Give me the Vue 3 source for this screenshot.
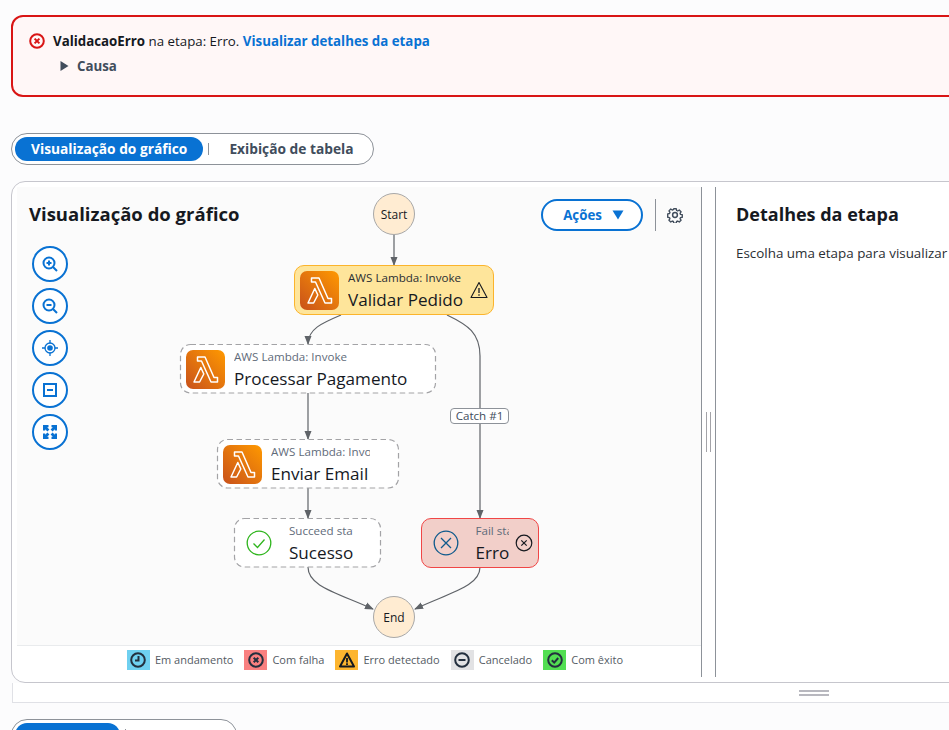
<script setup>
const legend = [
  { label: "Em andamento", bg: "#6fd0f0", kind: "clock" },
  { label: "Com falha", bg: "#f98080", kind: "x" },
  { label: "Erro detectado", bg: "#fdb52f", kind: "warn" },
  { label: "Cancelado", bg: "#e2e2e4", kind: "minus" },
  { label: "Com êxito", bg: "#52de52", kind: "check" },
];

const lambdas = [
  { id: "validar", title: "Validar Pedido", cls: "validar" },
  { id: "processar", title: "Processar Pagamento", cls: "processar" },
  { id: "enviar", title: "Enviar Email", cls: "enviar" },
];
</script>

<template>
  <div class="page">
    <div class="alert">
      <div class="alert-line">
        <svg class="alert-icon" viewBox="0 0 16 16" width="16" height="16">
          <circle cx="8" cy="8" r="6.8" fill="none" stroke="#d91515" stroke-width="2" />
          <path d="M5.6 5.6l4.8 4.8M10.4 5.6l-4.8 4.8" stroke="#d91515" stroke-width="2" fill="none" />
        </svg>
        <span><b>ValidacaoErro</b> na etapa: Erro. <a class="link">Visualizar detalhes da etapa</a></span>
      </div>
      <div class="cause">
        <svg viewBox="0 0 9 10" width="9" height="10"><path d="M0.5 0l8 5-8 5z" fill="#414d5c" /></svg>
        <b>Causa</b>
      </div>
    </div>

    <div class="segmented">
      <span class="seg active">Visualização do gráfico</span>
      <span class="seg-sep"></span>
      <span class="seg">Exibição de tabela</span>
    </div>

    <div class="panel">
      <div class="graph-side">
        <div class="canvas">
          <h2 class="graph-title">Visualização do gráfico</h2>

          <div class="toolbar">
            <button class="actions">Ações
              <svg viewBox="0 0 12 10" width="12" height="10"><path d="M0.5 0.5h11l-5.5 9z" fill="#0972d3" /></svg>
            </button>
            <span class="tool-sep"></span>
            <svg class="gear" viewBox="0 0 16 16" width="16" height="16">
              <path d="M6.6 1h2.8l.4 2 1.200.5 1.700-1.100 2 2-1.100 1.700.5 1.200 2 .4v2.800l-2 .4-.5 1.200 1.100 1.700-2 2-1.700-1.100-1.200.5-.4 2H6.600l-.4-2-1.200-.5-1.700 1.100-2-2 1.100-1.700-.5-1.200-2-.4V6.700l2-.4.5-1.200L1.300 3.400l2-2L5 2.500l1.200-.5z" fill="none" stroke="#414d5c" stroke-width="1.500" stroke-linejoin="round" transform="translate(.8 .8) scale(.9)" />
              <circle cx="8" cy="8" r="2.400" fill="none" stroke="#414d5c" stroke-width="1.500" />
            </svg>
          </div>

          <div class="zooms">
            <button class="zoom">
              <svg viewBox="0 0 16 16" width="16" height="16"><circle cx="7" cy="7" r="5.500" fill="none" stroke="#0972d3" stroke-width="2" /><path d="M11 11l4 4M4.500 7h5M7 4.500v5" stroke="#0972d3" stroke-width="2" fill="none" /></svg>
            </button>
            <button class="zoom">
              <svg viewBox="0 0 16 16" width="16" height="16"><circle cx="7" cy="7" r="5.500" fill="none" stroke="#0972d3" stroke-width="2" /><path d="M11 11l4 4M4.500 7h5" stroke="#0972d3" stroke-width="2" fill="none" /></svg>
            </button>
            <button class="zoom">
              <svg viewBox="0 0 16 16" width="16" height="16"><circle cx="8" cy="8" r="5" fill="none" stroke="#0972d3" stroke-width="1.300" /><circle cx="8" cy="8" r="2.800" fill="#0972d3" /><path d="M8 0v3.500M8 12.500V16M0 8h3.500M12.500 8H16" stroke="#0972d3" stroke-width="1.300" /></svg>
            </button>
            <button class="zoom">
              <svg viewBox="0 0 16 16" width="16" height="16"><rect x="2" y="2" width="12" height="12" fill="none" stroke="#0972d3" stroke-width="2" /><path d="M5 8h6" stroke="#0972d3" stroke-width="2" /></svg>
            </button>
            <button class="zoom">
              <svg viewBox="0 0 16 16" width="16" height="16"><path d="M1 6.500V1h5.500v2.200H5.200L7.400 5.400 5.400 7.400 3.200 5.200v1.300zM15 6.500V1H9.500v2.200h1.300L8.600 5.400l2 2 2.200-2.200v1.300zM1 9.500V15h5.500v-2.200H5.200l2.200-2.200-2-2-2.200 2.200V9.500zM15 9.500V15H9.500v-2.200h1.300l-2.200-2.200 2-2 2.200 2.200V9.500z" fill="#0972d3" /></svg>
            </button>
          </div>

          <svg class="edges" width="684" height="458" viewBox="17 187 684 458">
            <defs>
              <marker id="arrow" markerWidth="9" markerHeight="8" refX="8" refY="4" orient="auto" markerUnits="userSpaceOnUse">
                <path d="M0 .5l9 3.500-9 3.500z" fill="#5f6368" />
              </marker>
            </defs>
            <g fill="none" stroke="#5f6368" stroke-width="1.200">
              <path d="M394 235V265" marker-end="url(#arrow)" />
              <path d="M341 315C322 323 308 329 308 344" marker-end="url(#arrow)" />
              <path d="M447 315C468 325 480 333 480 356V518" marker-end="url(#arrow)" />
              <path d="M308 393V439" marker-end="url(#arrow)" />
              <path d="M308 488V518" marker-end="url(#arrow)" />
              <path d="M308 567C308 586 335 592 373 609" marker-end="url(#arrow)" />
              <path d="M480 567C480 586 452 592 415 609" marker-end="url(#arrow)" />
            </g>
            <g fill="#fff" stroke="#a3a3a6" stroke-width="1.200" stroke-dasharray="5.500 3.500">
              <rect x="180.500" y="344.500" width="255" height="48.500" rx="10" />
              <rect x="217.500" y="439.500" width="181" height="48.500" rx="10" />
              <rect x="234.500" y="518.500" width="146" height="48.500" rx="10" />
            </g>
          </svg>

          <div class="circle start">Start</div>
          <div class="circle end">End</div>

          <div v-for="n in lambdas" :key="n.id" class="node" :class="n.cls">
            <svg class="lambda" viewBox="0 0 39 39" width="39" height="39">
              <defs>
                <linearGradient :id="'lg-' + n.id" x1="0" y1="1" x2="1" y2="0">
                  <stop offset="0" stop-color="#c8511b" />
                  <stop offset="1" stop-color="#ff9900" />
                </linearGradient>
              </defs>
              <rect width="39" height="39" rx="7" :fill="'url(#lg-' + n.id + ')'" />
              <path d="M11.500 7h7.500l9 20.500h3.500V32H25L15.500 11H11.500zM14.800 17.500l3 6.500-4.200 8H8z" fill="none" stroke="#fff" stroke-width="1.500" stroke-linejoin="round" />
            </svg>
            <div class="node-text">
              <div class="node-type">AWS Lambda: Invoke</div>
              <div class="node-name">{{ n.title }}</div>
            </div>
            <svg v-if="n.id === 'validar'" class="node-warn" viewBox="0 0 18 18" width="18" height="18">
              <path d="M9 1.500L17 16.500H1z" fill="none" stroke="#16191f" stroke-width="1.100" stroke-linejoin="round" />
              <path d="M9 7v5M9 13.200v1.600" stroke="#16191f" stroke-width="1.300" />
            </svg>
          </div>

          <div class="node sucesso">
            <svg class="state-icon" viewBox="0 0 26 26" width="26" height="26">
              <circle cx="13" cy="13" r="11.800" fill="none" stroke="#2fb51d" stroke-width="1.300" />
              <path d="M7.500 13.500l4 4 7-8" fill="none" stroke="#2fb51d" stroke-width="1.300" />
            </svg>
            <div class="node-text">
              <div class="node-type">Succeed state</div>
              <div class="node-name">Sucesso</div>
            </div>
          </div>

          <div class="node erro">
            <svg class="state-icon" viewBox="0 0 26 26" width="26" height="26">
              <circle cx="13" cy="13" r="11.800" fill="none" stroke="#0f5a8c" stroke-width="1.300" />
              <path d="M8 8l10 10M18 8L8 18" fill="none" stroke="#0f5a8c" stroke-width="1.300" />
            </svg>
            <div class="node-text">
              <div class="node-type">Fail state</div>
              <div class="node-name">Erro</div>
            </div>
            <svg class="node-warn" viewBox="0 0 18 18" width="18" height="18">
              <circle cx="9" cy="9" r="7.800" fill="none" stroke="#16191f" stroke-width="1.200" />
              <path d="M6.300 6.300l5.400 5.400M11.700 6.300l-5.400 5.400" stroke="#16191f" stroke-width="1.200" />
            </svg>
          </div>

          <div class="catch">Catch #1</div>
        </div>

        <div class="legend">
          <div v-for="item in legend" :key="item.label" class="legend-item">
            <span class="swatch" :style="{ background: item.bg }">
              <svg viewBox="0 0 16 16" width="16" height="16">
                <template v-if="item.kind === 'warn'">
                  <path d="M8 1.500L15 14.500H1z" fill="none" stroke="#16191f" stroke-width="2" stroke-linejoin="round" />
                  <path d="M8 6v4.500M8 11.300v1.700" stroke="#16191f" stroke-width="1.800" />
                </template>
                <template v-else>
                  <circle cx="8" cy="8" r="6.800" fill="none" stroke="#232f3e" stroke-width="2" />
                  <path v-if="item.kind === 'clock'" d="M8.500 4v4.500H5" fill="none" stroke="#232f3e" stroke-width="2" />
                  <path v-if="item.kind === 'x'" d="M5.700 5.700l4.600 4.600M10.300 5.700l-4.600 4.600" stroke="#232f3e" stroke-width="2" />
                  <path v-if="item.kind === 'minus'" d="M4.500 8h7" stroke="#232f3e" stroke-width="2" />
                  <path v-if="item.kind === 'check'" d="M4.800 8.200l2.400 2.400 4-4.600" fill="none" stroke="#232f3e" stroke-width="2" />
                </template>
              </svg>
            </span>
            <span class="legend-label">{{ item.label }}</span>
          </div>
        </div>
      </div>

      <div class="v-handle"><span></span><span></span></div>

      <div class="details">
        <h2>Detalhes da etapa</h2>
        <p>Escolha uma etapa para visualizar os detalhes</p>
      </div>
    </div>

    <div class="h-handle"><span></span><span></span></div>

    <div class="segmented bottom">
      <span class="seg active">Detalhes</span>
      <span class="seg-sep"></span>
      <span class="seg">Eventos</span>
    </div>
  </div>
</template>

<style>
html,
body {
  margin: 0;
  overflow: hidden;
  background: #fcfcfd;
}
</style>

<style scoped>
.page {
  width: 949px;
  height: 730px;
  overflow: hidden;
  box-sizing: border-box;
  padding: 15px 0 0 11px;
  font-family: "Open Sans", "Noto Sans", sans-serif;
  font-size: 13.3px;
  color: #16191f;
  background: #fcfcfd;
}

.alert {
  width: 1100px;
  height: 82px;
  box-sizing: border-box;
  border: 2px solid #d91515;
  border-radius: 12px;
  background: #fff7f7;
  padding: 14px 16px;
}

.alert-line {
  display: flex;
  align-items: center;
  gap: 8px;
  height: 20px;
}

.link {
  color: #0972d3;
  font-weight: 700;
}

.cause {
  display: flex;
  align-items: center;
  gap: 8px;
  margin: 5px 0 0 31px;
  color: #414d5c;
  height: 20px;
}

.segmented {
  display: flex;
  align-items: center;
  width: 363px;
  height: 32px;
  box-sizing: border-box;
  margin-top: 36px;
  padding: 0 3px;
  border: 1px solid #8d9299;
  border-radius: 16px;
  background: #fff;
  font-size: 13.75px;
  font-weight: 700;
  color: #414d5c;
}

.seg {
  padding: 0 16px;
  line-height: 24px;
  white-space: nowrap;
}

.seg.active {
  background: #0972d3;
  color: #fff;
  border-radius: 12px;
}

.seg-sep {
  width: 1px;
  height: 12px;
  margin: 0 4px 0 5px;
  background: #8d9299;
}

.panel {
  display: flex;
  width: 1100px;
  height: 502px;
  box-sizing: border-box;
  margin-top: 16px;
  padding: 5px 0 0 5px;
  border: 1px solid #c6c6cd;
  border-radius: 14px 0 0 14px;
  background: #fff;
}

.graph-side {
  width: 684px;
  flex: none;
  display: flex;
  flex-direction: column;
}

.canvas {
  position: relative;
  height: 459px;
  background: #fbfbfb;
  border-bottom: 1px solid #e9ebed;
  box-sizing: border-box;
}

.graph-title {
  margin: 0;
  padding: 14px 0 0 12px;
  font-size: 18.5px;
  line-height: 26px;
  font-weight: 700;
}

.toolbar {
  position: absolute;
  left: 524px;
  top: 12px;
  display: flex;
  align-items: center;
}

.actions {
  display: flex;
  align-items: center;
  justify-content: center;
  gap: 10px;
  width: 102px;
  height: 32px;
  box-sizing: border-box;
  padding: 0 0 0 3px;
  border: 2px solid #0972d3;
  border-radius: 16px;
  background: #fff;
  color: #0972d3;
  font: 700 13.3px "Open Sans", sans-serif;
}

.tool-sep {
  width: 1px;
  height: 32px;
  margin: 0 11px 0 12px;
  background: #8d9299;
}

.zooms {
  position: absolute;
  left: 15px;
  top: 59px;
  display: flex;
  flex-direction: column;
  gap: 6px;
}

.zoom {
  width: 36px;
  height: 36px;
  padding: 0;
  display: flex;
  align-items: center;
  justify-content: center;
  border: 2px solid #0972d3;
  border-radius: 50%;
  background: #fff;
}

.edges {
  position: absolute;
  left: 0;
  top: 0;
}

.circle {
  position: absolute;
  width: 42px;
  height: 42px;
  box-sizing: border-box;
  border: 1px solid #a8a8a8;
  border-radius: 50%;
  background: #ffecd2;
  display: flex;
  align-items: center;
  justify-content: center;
  font-size: 12px;
}

.start {
  left: 356px;
  top: 6px;
}

.end {
  left: 356px;
  top: 409px;
}

.node {
  position: absolute;
  height: 50px;
  box-sizing: border-box;
  display: flex;
  align-items: center;
  border-radius: 10px;
}

.node-text {
  overflow: hidden;
  white-space: nowrap;
  padding-top: 2px;
}

.node-type {
  font-size: 11.6px;
  line-height: 15px;
  color: #5f6b7a;
}

.node-name {
  font-size: 17.1px;
  line-height: 24px;
  margin-top: 3px;
}

.lambda {
  flex: none;
  margin: 0 9px 0 6px;
}

.validar {
  left: 277px;
  top: 78px;
  width: 200px;
  border: 1px solid #fbb42c;
  background: #fee59b;
}

.validar .lambda {
  margin-left: 5px;
}

.validar .node-type {
  color: #2a2e33;
}

.processar {
  left: 163px;
  top: 157px;
  width: 256px;
}

.enviar {
  left: 200px;
  top: 252px;
  width: 182px;
}

.enviar .node-text {
  width: 99px;
}

.sucesso {
  left: 217px;
  top: 331px;
  width: 147px;
}

.sucesso .node-text {
  width: 64px;
}

.state-icon {
  flex: none;
  margin: 0 17px 0 12px;
}

.erro {
  left: 404px;
  top: 331px;
  width: 118px;
  border: 1.5px solid #f04646;
  background: #f2cfc9;
}

.erro .node-text {
  width: 33px;
}

.erro .state-icon {
  margin: 0 17px 0 10.5px;
}

.node-warn {
  flex: none;
  margin: 0 5px 0 auto;
}

.catch {
  position: absolute;
  left: 433px;
  top: 221px;
  width: 59px;
  height: 16px;
  box-sizing: border-box;
  border: 1px solid #8d9299;
  border-radius: 4px;
  background: #fff;
  font-size: 11.6px;
  line-height: 14px;
  text-align: center;
  color: #414d5c;
}

.legend {
  display: flex;
  justify-content: center;
  align-items: center;
  gap: 11px;
  height: 28px;
  padding-left: 32px;
}

.legend-item {
  display: flex;
  align-items: center;
  gap: 5px;
}

.swatch {
  width: 23px;
  height: 20px;
  display: flex;
  align-items: center;
  justify-content: center;
}

.legend-label {
  font-size: 11px;
  line-height: 18px;
  margin-top: -1px;
  color: #545b64;
}

.v-handle {
  flex: none;
  width: 15px;
  height: 490px;
  box-sizing: border-box;
  border-left: 1px solid #8d9299;
  border-right: 1px solid #8d9299;
  display: flex;
  justify-content: center;
  gap: 3px;
  padding-top: 225px;
}

.v-handle span {
  width: 1px;
  height: 40px;
  background: #a3a3a8;
}

.details {
  padding: 14px 0 0 20px;
}

.details h2 {
  margin: 0;
  font-size: 18px;
  line-height: 26px;
}

.details p {
  margin: 16px 0 0;
  font-size: 13.4px;
  line-height: 20px;
  color: #2a2e33;
}

.h-handle {
  width: 1100px;
  height: 20px;
  margin-left: 1px;
  box-sizing: border-box;
  border: 1px solid #e0e1e6;
  border-top: none;
  background: #fff;
  padding-left: 786px;
  display: flex;
  flex-direction: column;
  justify-content: center;
  gap: 2px;
}

.h-handle span {
  width: 30px;
  height: 2px;
  background: #b8b8bf;
}

.segmented.bottom {
  width: 226px;
  margin-top: 16px;
}

.bottom .seg {
  height: 24px;
  padding-top: 2px;
  box-sizing: border-box;
}

.bottom .seg.active {
  width: 105px;
  text-align: center;
}
</style>
